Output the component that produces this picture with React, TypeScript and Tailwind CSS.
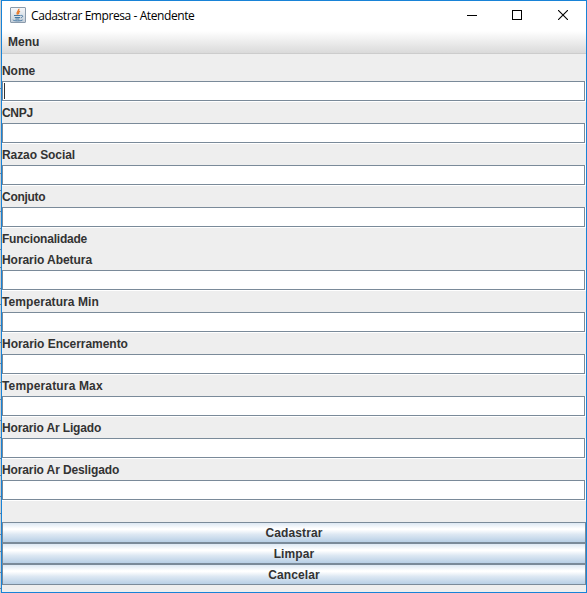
import React from "react";

type Row = { text: string; spacing: string; field: boolean };

const rows: Row[] = [
  { text: "Nome", spacing: "tracking-[-0.05px]", field: true },
  { text: "CNPJ", spacing: "tracking-[-0.3px]", field: true },
  { text: "Razao Social", spacing: "tracking-[-0.08px]", field: true },
  { text: "Conjuto", spacing: "tracking-[-0.28px]", field: true },
  { text: "Funcionalidade", spacing: "tracking-[-0.21px]", field: false },
  { text: "Horario Abetura", spacing: "tracking-[-0.06px]", field: true },
  { text: "Temperatura Min", spacing: "tracking-[0.07px]", field: true },
  { text: "Horario Encerramento", spacing: "tracking-[-0.04px]", field: true },
  { text: "Temperatura Max", spacing: "tracking-[0.15px]", field: true },
  { text: "Horario Ar Ligado", spacing: "tracking-[-0.14px]", field: true },
  { text: "Horario Ar Desligado", spacing: "tracking-[-0.12px]", field: true },
];

const actions = ["Cadastrar", "Limpar", "Cancelar"];

// Vertical positions where lines of the window behind show at the left edge.
const edgeMarks = [
  88, 173, 190, 211, 228, 249, 267, 288, 304, 325, 342, 363, 382, 399, 420, 437, 458, 475, 496, 513, 534, 551, 572, 588,
];

function BackdropEdge() {
  return (
    <div className="flex w-px flex-col bg-[#cfcfcf]">
      {edgeMarks.map((y, i) => (
        <div
          key={y}
          className="w-px shrink-0 border-b border-[#6f8093]"
          style={{ height: y + 1 - (i === 0 ? 0 : edgeMarks[i - 1] + 1) }}
        />
      ))}
    </div>
  );
}

function JavaIcon() {
  return (
    <svg width="16" height="16" viewBox="0 0 16 16" fill="none">
      <defs>
        <linearGradient id="tile" x1="0" y1="0" x2="0" y2="1">
          <stop offset="0" stopColor="#f7f8fa" />
          <stop offset="1" stopColor="#c3ced9" />
        </linearGradient>
      </defs>
      <rect x="0.5" y="0.5" width="15" height="15" rx="0.5" fill="url(#tile)" stroke="#8b9bac" />
      <path d="M8.8 1.8C9.6 3.6 5.6 4.5 7.5 7.6M10 4.2C8.6 4.9 8 5.8 8.9 7.2" stroke="#e8792a" strokeWidth="1.3" />
      <path
        d="M4 8.5h6.5M4.8 10.5h5.2M5.4 12h4M10.8 8.5C13.6 8 13 10.4 10.8 10.8M3 12.8C3.2 14.2 11.5 14.2 12.6 12.9"
        stroke="#4478a3"
        strokeWidth="1"
      />
    </svg>
  );
}

function TextField({ focused }: { focused: boolean }) {
  return (
    <div className="h-[21px] border-r border-b border-white bg-[#7a8a99] p-px">
      <div className="flex h-full items-start border-t border-l border-white bg-white">
        {focused && <div className="h-4 w-px bg-[#333333]" />}
      </div>
    </div>
  );
}

export default function App() {
  return (
    <div className="flex h-[593px] w-[587px] overflow-hidden font-['Liberation_Sans',sans-serif] text-[12px] font-bold text-[#333333]">
      <BackdropEdge />
      <div className="flex w-[586px] flex-col border border-[#1883d7] bg-[#eeeeee]">
        <header className="flex h-[30px] items-center bg-white pb-[2px] font-['Open_Sans',sans-serif] font-normal text-black">
          <div className="ml-2 flex">
            <JavaIcon />
          </div>
          <span className="ml-[5px] flex-1 pt-[2px] tracking-[-0.42px] whitespace-nowrap">
            Cadastrar Empresa - Atendente
          </span>
          <div className="flex pr-[18px]">
            <svg className="mr-[35px]" width="10" height="10" shapeRendering="crispEdges">
              <path d="M0 5.5h10" stroke="#000" />
            </svg>
            <svg className="mr-9" width="10" height="10" shapeRendering="crispEdges">
              <path d="M.5 .5h9v9h-9z" fill="none" stroke="#000" />
            </svg>
            <svg width="10" height="10">
              <path d="M0 0l10 10M10 0L0 10" stroke="#000" strokeWidth="1.1" />
            </svg>
          </div>
        </header>
        <nav className="flex h-[23px] items-center border-b border-[#cccccc] bg-linear-to-b from-white to-[#dadada] pl-[6px]">
          Menu
        </nav>
        <main className="flex flex-col pt-[6px]">
          {rows.map((row, i) => (
            <div key={row.text}>
              <div className={`h-[21px] leading-[23px] whitespace-nowrap ${row.spacing}`}>{row.text}</div>
              {row.field && <TextField focused={i === 0} />}
            </div>
          ))}
          <div className="h-[21px]" />
          {actions.map((action) => (
            <button
              key={action}
              className="flex h-[21px] items-center justify-center border border-[#7a8a99] bg-[linear-gradient(to_bottom,#dde8f3_0%,#ffffff_30%,#ffffff_35%,#dde8f3_60%,#b8cfe5_100%)] tracking-[0.1px]"
            >
              {action}
            </button>
          ))}
        </main>
      </div>
    </div>
  );
}
